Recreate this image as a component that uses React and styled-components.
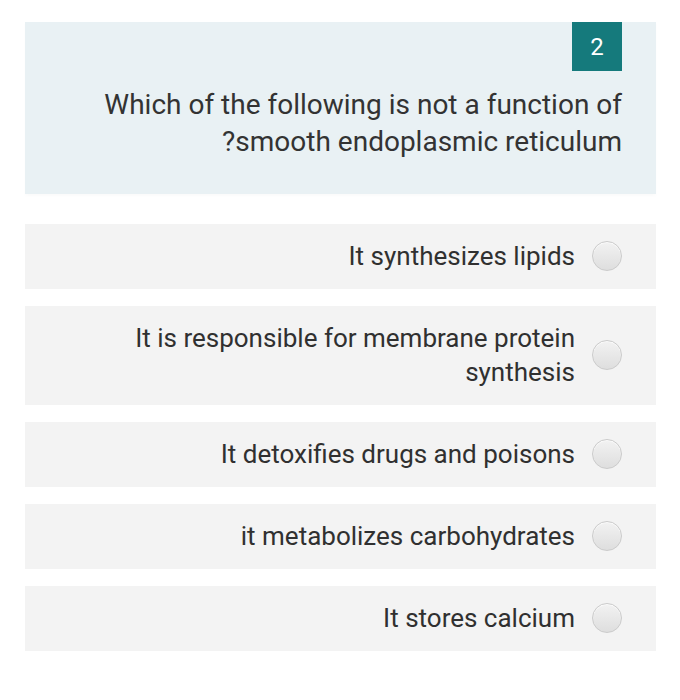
import React from 'react';
import styled, { createGlobalStyle } from 'styled-components';

const GlobalStyle = createGlobalStyle`
  body {
    margin: 0;
    background: #ffffff;
    font-family: Roboto, "Liberation Sans", sans-serif;
  }
`;

const Page = styled.div`
  width: 631px;
  padding: 22px 0 0 25px;
  display: flex;
  flex-direction: column;
`;

// question header with number badge
const QuestionCard = styled.div`
  background: #e9f1f4;
  padding: 0 34px 34px 34px;
  display: flex;
  flex-direction: column;
  align-items: flex-end;
  margin-bottom: 30px;
  box-shadow: 0 2px 3px rgba(0, 0, 0, 0.02);
`;

const Badge = styled.div`
  width: 50px;
  height: 49px;
  background: #157a7c;
  color: #ffffff;
  font-size: 24px;
  display: flex;
  align-items: center;
  justify-content: center;
  margin-bottom: 15px;
`;

const QuestionText = styled.div`
  direction: rtl;
  text-align: right;
  font-size: 28px;
  line-height: 37px;
  color: #333333;
  width: 100%;
`;

const OptionList = styled.div`
  display: flex;
  flex-direction: column;
  gap: 17px;
`;

const Option = styled.label`
  direction: rtl;
  display: flex;
  align-items: center;
  gap: 17px;
  background: #f3f3f3;
  padding: 15px 34px 16px 34px;
  min-height: 34px;
  cursor: pointer;
`;

const Radio = styled.input`
  appearance: none;
  flex: none;
  margin: 0;
  width: 30px;
  height: 30px;
  border-radius: 50%;
  border: 1px solid #cbcbcb;
  background: linear-gradient(#f2f2f2, #dedede);
  box-shadow: inset 0 1px 1px rgba(255, 255, 255, 0.8);
`;

const OptionText = styled.span`
  text-align: right;
  font-size: 26px;
  line-height: 34px;
  color: #303030;
`;

const options = [
  'It synthesizes lipids',
  'It is responsible for membrane protein synthesis',
  'It detoxifies drugs and poisons',
  'it metabolizes carbohydrates',
  'It stores calcium',
];

const App = () => (
  <>
    <GlobalStyle />
    <Page>
      <QuestionCard>
        <Badge>2</Badge>
        <QuestionText>
          Which of the following is not a function of smooth endoplasmic reticulum?
        </QuestionText>
      </QuestionCard>
      <OptionList>
        {options.map((text) => (
          <Option key={text}>
            <Radio type="radio" name="q2" />
            <OptionText>{text}</OptionText>
          </Option>
        ))}
      </OptionList>
    </Page>
  </>
);

export default App;
